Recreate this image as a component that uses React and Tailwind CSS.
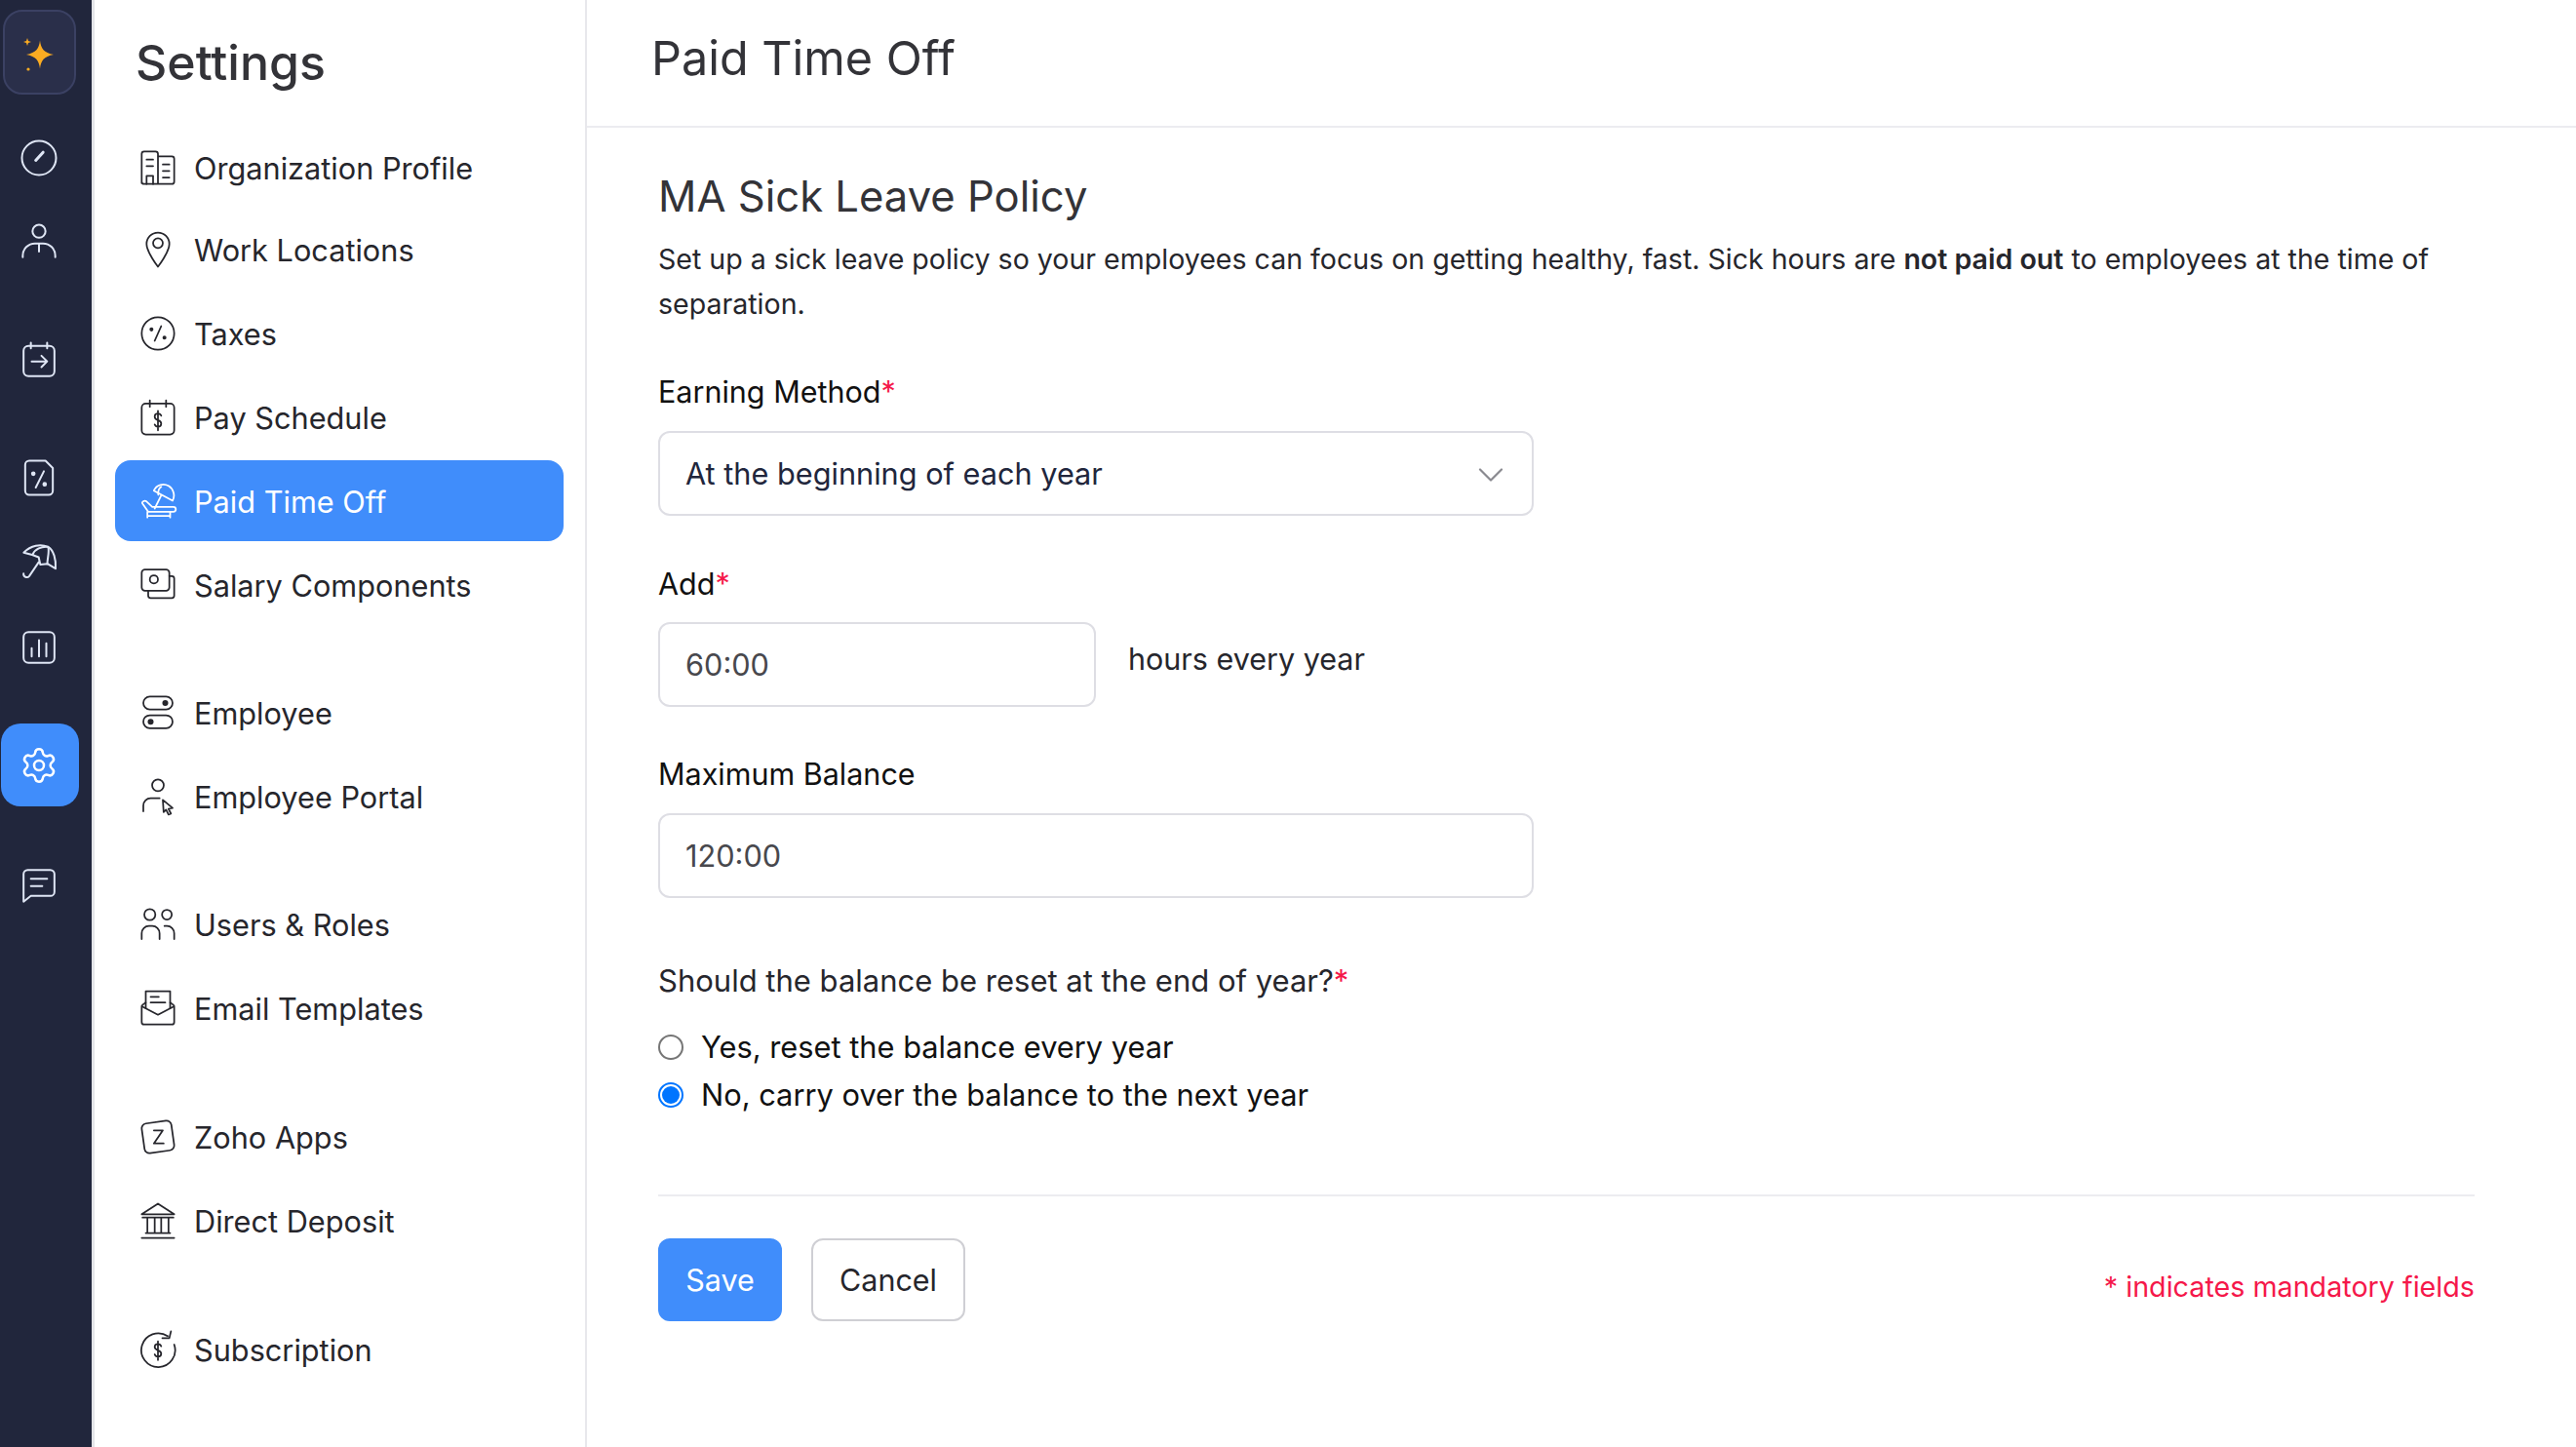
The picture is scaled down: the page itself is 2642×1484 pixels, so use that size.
import { ChevronDown, Settings } from 'lucide-react'

const Svg = ({ className = '', strokeWidth = 1.2, children }) => (
  <svg viewBox="0 0 24 24" fill="none" stroke="currentColor" strokeWidth={strokeWidth} strokeLinecap="round" strokeLinejoin="round" className={className}>
    {children}
  </svg>
)

const icons = {
  org: (
    <>
      <path d="M2 21.500V3.500A1.500 1.500 0 0 1 3.500 2h7A1.500 1.500 0 0 1 12 3.500v18.500M12 5h8.500A1.500 1.500 0 0 1 22 6.500v14a1.500 1.500 0 0 1-1.500 1.500h-17A1.500 1.500 0 0 1 2 20.500" />
      <path d="M5 7h4M5 11h4M15 10h4M15 14h4M15 18h4M5 22v-5h4v5" />
    </>
  ),
  pin: (
    <>
      <path d="M12 22.500S5 13.500 5 8.500a7 7 0 0 1 14 0C19 13.500 12 22.500 12 22.500z" />
      <circle cx="12" cy="8" r="3" />
    </>
  ),
  tax: (
    <>
      <circle cx="12" cy="12" r="10" />
      <path d="M14 7.500l-4 9" />
      <circle cx="8" cy="9.500" r=".7" fill="currentColor" />
      <circle cx="16" cy="14.500" r=".7" fill="currentColor" />
    </>
  ),
  pay: (
    <>
      <rect x="2" y="3.500" width="20" height="19" rx="2.500" />
      <path d="M7 1.500v4M17 1.500v4" />
      <path d="M14 11c-.3-.9-1-1.400-2-1.400-1.200 0-2 .7-2 1.900s.8 1.800 2 2.200 2 1 2 2.200-.8 1.900-2 1.900c-1 0-1.700-.5-2-1.400M12 8v12" />
    </>
  ),
  beach: (
    <>
      <path d="M9.500 5.500C11 1.800 15.500.800 18.500 2.600s4.300 5.800 2.500 9.100z" />
      <path d="M14 3.200c-1.500 1-2 3-1.800 4.900M14 8.500L10 16.500" />
      <path d="M2.500 13.500l3.500 5h15.500a1.300 1.300 0 0 0 0-3H8.500L5 12.200c-1.400-.9-3.300.2-2.500 1.300zM5.500 18.500V22M19.500 18.500V22M5.500 21h14" />
    </>
  ),
  salary: (
    <>
      <rect x="2" y="2.500" width="17" height="13" rx="2" />
      <path d="M19 6.500h1.500A1.500 1.500 0 0 1 22 8v10.500a1.500 1.500 0 0 1-1.500 1.500h-13A1.500 1.500 0 0 1 6 18.500v-3" />
      <circle cx="9.500" cy="8.500" r="2.500" />
    </>
  ),
  toggles: (
    <>
      <rect x="3" y="2" width="18" height="8" rx="4" />
      <rect x="3" y="13.500" width="18" height="8" rx="4" />
      <circle cx="16.500" cy="6" r="1.300" fill="currentColor" />
      <circle cx="7.500" cy="17.500" r="1.300" fill="currentColor" />
    </>
  ),
  portal: (
    <>
      <circle cx="12" cy="5" r="3.600" />
      <path d="M3 21v-3.500A4.500 4.500 0 0 1 7.500 13H13" />
      <path d="M15 14l6 5-2.500.5L20 22.500l-1.500.500-1.500-3-1.500 1.500z" />
    </>
  ),
  users: (
    <>
      <circle cx="7" cy="6" r="3.400" />
      <circle cx="17.500" cy="6" r="3" />
      <path d="M2 21v-3.500A4.500 4.500 0 0 1 6.500 13h2A4.500 4.500 0 0 1 13 17.500V21M16 13h1.500a4.500 4.500 0 0 1 4.500 4.500V21" />
    </>
  ),
  mail: (
    <>
      <path d="M4.500 12V1.500h15V12" />
      <path d="M4.500 8.500L2.500 10A1 1 0 0 0 2 11v9.500A1.500 1.500 0 0 0 3.500 22h17a1.500 1.500 0 0 0 1.500-1.500V11a1 1 0 0 0-.5-1l-2-1.500" />
      <path d="M2.300 11L12 16l9.700-5M7.500 5h5M7.500 8.500h9" />
    </>
  ),
  zoho: (
    <>
      <rect x="2.800" y="2.800" width="18.400" height="18.400" rx="3" transform="rotate(-8 12 12)" />
      <path d="M9.500 8h5.500l-5.500 8h6" />
    </>
  ),
  bank: (
    <>
      <path d="M12 1.500L2 8h20zM2.500 10h19M2 22.500h20M4.500 19.500h15M5.500 10v9.500M10 10v9.500M14 10v9.500M18.500 10v9.500" />
    </>
  ),
  sub: (
    <>
      <path d="M18 3.800A10.400 10.400 0 1 0 22 9M20 .800L19 5h-4.300" />
      <path d="M14 10c-.3-.9-1-1.400-2-1.400-1.200 0-2 .7-2 1.800s.8 1.700 2 2.100 2 1 2 2.100-.8 1.800-2 1.800c-1 0-1.700-.5-2-1.400M12 7v11.500" />
    </>
  ),
  gauge: (
    <>
      <ellipse cx="12" cy="12" rx="10.500" ry="10.500" />
      <path d="M10 13.500l4.500-5" strokeWidth="1.800" />
    </>
  ),
  person: (
    <>
      <circle cx="12" cy="5.500" r="4" />
      <path d="M2 21.500v-1A7.500 7.500 0 0 1 9.500 13h5a7.500 7.500 0 0 1 7.500 7.500v1M12 13v5" />
    </>
  ),
  calendar: (
    <>
      <rect x="2.500" y="3.500" width="19" height="18.500" rx="3" />
      <path d="M7 1.500v3.500M17 1.500v3.500M7.500 13h9M13.500 9.500l3.500 3.500-3.500 3.500" />
    </>
  ),
  taxdoc: (
    <>
      <path d="M6 1.500h10l4.500 4.500v14a2.500 2.500 0 0 1-2.500 2.500H6A2.500 2.500 0 0 1 3.500 20V4A2.500 2.500 0 0 1 6 1.500z" />
      <path d="M15 8l-5 10" />
      <circle cx="8.500" cy="9.500" r=".8" fill="currentColor" />
      <circle cx="15.500" cy="16" r=".8" fill="currentColor" />
    </>
  ),
  umbrella: (
    <>
      <path d="M2.600 7C7 2.500 13 1.500 17.600 3.500c3.500 2 5 8 4.600 13.400l-5-3-4.400.5-1-4.500-4-1.500z" />
      <path d="M8.200 8C9.500 5 13.500 3 17.600 3.500c1 3-.5 7-.5 10.500" />
      <path d="M11.800 13L6 21.500a2 2 0 0 1-3.500-1.500" />
    </>
  ),
  chart: (
    <>
      <rect x="2.500" y="2.500" width="19" height="19" rx="3" />
      <path d="M7.500 12.500v5M12 7.500v10M16.500 9.500v8" />
    </>
  ),
  chat: (
    <>
      <path d="M5 2.500h14A2.500 2.500 0 0 1 21.500 5v11a2.500 2.500 0 0 1-2.500 2.500H7L2.500 22V5A2.500 2.500 0 0 1 5 2.500z" />
      <path d="M7 8h10M7 12.500h7" />
    </>
  ),
}

const railItems = [
  { icon: 'gauge', top: 'mt-[45px]' },
  { icon: 'person', top: 'mt-[46px]' },
  { icon: 'calendar', top: 'mt-[81px]' },
  { icon: 'taxdoc', top: 'mt-[81px]' },
  { icon: 'umbrella', top: 'mt-[45px]' },
  { icon: 'chart', top: 'mt-[49px]' },
]

const groups = [
  {
    gap: 'mb-[48px]',
    tight: true,
    items: [
      ['org', 'Organization Profile'],
      ['pin', 'Work Locations'],
      ['tax', 'Taxes'],
      ['pay', 'Pay Schedule'],
      ['beach', 'Paid Time Off', true],
      ['salary', 'Salary Components'],
    ],
  },
  {
    gap: 'mb-[48px]',
    items: [
      ['toggles', 'Employee'],
      ['portal', 'Employee Portal'],
    ],
  },
  {
    gap: 'mb-[49px]',
    items: [
      ['users', 'Users & Roles'],
      ['mail', 'Email Templates'],
    ],
  },
  {
    gap: 'mb-[49px]',
    items: [
      ['zoho', 'Zoho Apps'],
      ['bank', 'Direct Deposit'],
    ],
  },
  { gap: '', items: [['sub', 'Subscription']] },
]

function Rail() {
  return (
    <aside className="w-[97px] shrink-0 bg-[#21263c] border-r-[3px] border-[#e3e4e8] pr-[14px] flex flex-col items-center text-[#dfe6f5]">
      <div className="mt-[10px] w-[75px] h-[87px] shrink-0 rounded-[20px] bg-[#2a2f4a] border-2 border-[#3b4163] flex items-center justify-center">
        <svg viewBox="0 0 40 44" className="w-[40px] h-[44px]" fill="#fbac22">
          <path d="M21 9.500C22 18 25 22 35 24 25 26 22 30 21 38.500 20 30 17 26 7 24 17 22 20 18 21 9.500z" />
          <path d="M8 7l1 3 3 1-3 1-1 3-1-3-3-1 3-1z" />
          <circle cx="9" cy="39" r="1.600" />
        </svg>
      </div>
      {railItems.map((item) => (
        <Svg key={item.icon} className={`w-[40px] h-[40px] shrink-0 ${item.top}`}>
          {icons[item.icon]}
        </Svg>
      ))}
      <div className="mt-[58px] ml-[2px] w-[80px] h-[85px] shrink-0 rounded-[20px] bg-[#408dfb] text-white flex items-center justify-center">
        <Settings className="w-[40px] h-[40px] -ml-[2px]" strokeWidth={1.5} />
      </div>
      <Svg className="w-[40px] h-[40px] shrink-0 mt-[61px]">{icons.chat}</Svg>
    </aside>
  )
}

function SettingsNav() {
  return (
    <nav className="w-[505px] shrink-0 border-r-2 border-[#e8e8ec] pl-[21px] pr-[22px]">
      <h2 className="pl-[21px] pt-[32px] h-[130px] text-[50px] leading-[64px] font-medium text-[#333338]">Settings</h2>
      {groups.map((group) => (
        <div key={group.items[0][1]} className={`flex flex-col gap-[3px] ${group.gap}`}>
          {group.items.map(([icon, label, active], i) => (
            <div
              key={label}
              className={`h-[83px] flex items-center pl-[24px] rounded-[16px] text-[30.7px] ${group.tight && i === 0 ? '-mb-[2px]' : ''} ${active ? 'bg-[#408dfb] text-white' : 'text-[#26262c]'}`}
            >
              <Svg strokeWidth={1.05} className="w-[40px] h-[40px] shrink-0 mr-[17px]">{icons[icon]}</Svg>
              <span className="pt-[3px]">{label}</span>
            </div>
          ))}
        </div>
      ))}
    </nav>
  )
}

const Req = () => <span className="text-[#f5184a]">*</span>

function Main() {
  return (
    <main className="flex-1 min-w-0">
      <header className="h-[131px] border-b-2 border-[#ececf0] pl-[66px] pt-[25px]">
        <h1 className="text-[48.5px] leading-[70px] text-[#333338]">Paid Time Off</h1>
      </header>
      <section className="pl-[73px] pr-[104px] pt-[41px] text-[#111]">
        <h3 className="text-[43.6px] leading-[60px] text-[#333338]">MA Sick Leave Policy</h3>
        <p className="mt-[11px] text-[28.56px] leading-[46px] text-[#26262c]">
          Set up a sick leave policy so your employees can focus on getting healthy, fast. Sick hours are{' '}
          <span className="font-semibold">not paid out</span> to employees at the time of separation.
        </p>
        <label className="block mt-[44px] text-[30.5px] leading-[46px]">
          Earning Method<Req />
        </label>
        <div className="mt-[17px] w-[898px] h-[87px] border-2 border-[#dedee4] rounded-[12px] pl-[26px] pr-[20px] pt-[2px] flex items-center justify-between text-[30.7px] text-[#21263c]">
          At the beginning of each year
          <ChevronDown className="w-[44px] h-[44px] text-[#8a8a90]" strokeWidth={1.2} />
        </div>
        <label className="block mt-[47px] text-[30.5px] leading-[46px]">
          Add<Req />
        </label>
        <div className="mt-[16px] flex">
          <div className="w-[449px] h-[87px] border-2 border-[#dedee4] rounded-[12px] pl-[26px] pt-[2px] flex items-center text-[30.7px] text-[#48484d]">60:00</div>
          <span className="ml-[33px] mt-[15px] text-[30.5px] leading-[46px] text-[#26262c]">hours every year</span>
        </div>
        <label className="block mt-[46px] text-[30.5px] leading-[46px]">Maximum Balance</label>
        <div className="mt-[17px] w-[898px] h-[87px] border-2 border-[#dedee4] rounded-[12px] pl-[26px] pt-[2px] flex items-center text-[30.7px] text-[#48484d]">120:00</div>
        <p className="mt-[62px] text-[31px] leading-[46px] text-[#26262c]">
          Should the balance be reset at the end of year?<Req />
        </p>
        <div className="mt-[22px] flex flex-col gap-[3px] text-[30.8px] leading-[46px]">
          <label className="flex items-center">
            <span className="w-[26px] h-[26px] rounded-full border-2 border-[#767676] mr-[18px]" />
            Yes, reset the balance every year
          </label>
          <label className="flex items-center">
            <span className="w-[26px] h-[26px] rounded-full border-2 border-[#0075ff] mr-[18px] flex items-center justify-center">
              <span className="w-[18px] h-[18px] rounded-full bg-[#0075ff]" />
            </span>
            No, carry over the balance to the next year
          </label>
        </div>
        <div className="mt-[79px] border-t-2 border-[#ececf0] pt-[43px] flex items-center">
          <button className="w-[127px] h-[85px] rounded-[12px] bg-[#408dfb] text-white text-[30.5px]">Save</button>
          <button className="ml-[30px] w-[158px] h-[85px] rounded-[12px] border-2 border-[#cfcfd4] text-[#26262c] text-[30.5px]">Cancel</button>
          <span className="ml-auto mt-[14px] text-[28.7px] text-[#f5184a]">* indicates mandatory fields</span>
        </div>
      </section>
    </main>
  )
}

export default function App() {
  return (
    <div className="flex h-screen overflow-hidden bg-white font-['Inter',sans-serif]">
      <Rail />
      <SettingsNav />
      <Main />
    </div>
  )
}
